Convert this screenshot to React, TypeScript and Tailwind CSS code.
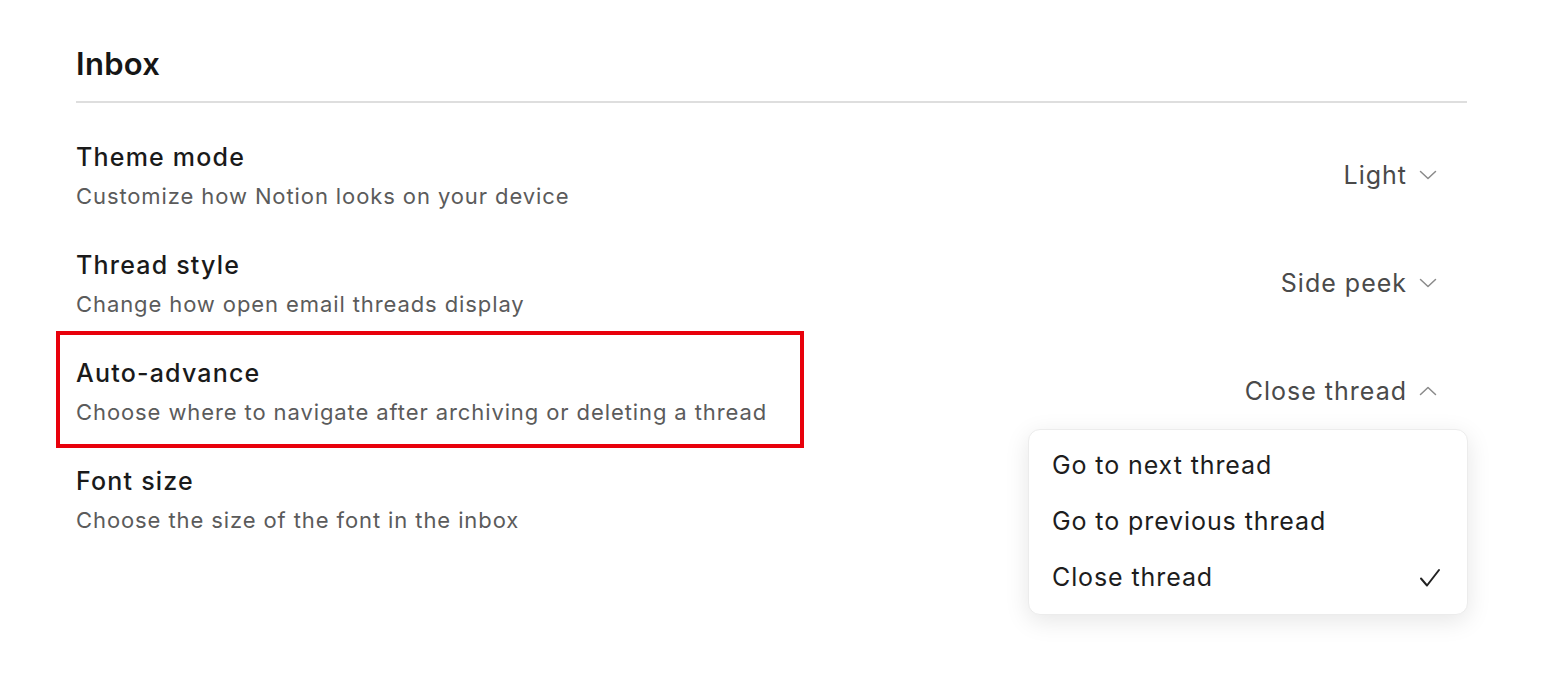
import React from 'react';

type Setting = {
  title: string;
  description: string;
  value: string;
  open?: boolean;
};

const settings: Setting[] = [
  { title: 'Theme mode', description: 'Customize how Notion looks on your device', value: 'Light' },
  { title: 'Thread style', description: 'Change how open email threads display', value: 'Side peek' },
  {
    title: 'Auto-advance',
    description: 'Choose where to navigate after archiving or deleting a thread',
    value: 'Close thread',
    open: true,
  },
  { title: 'Font size', description: 'Choose the size of the font in the inbox', value: '' },
];

const options = ['Go to next thread', 'Go to previous thread', 'Close thread'];

const Chevron: React.FC<{ up?: boolean }> = ({ up }) => (
  <svg width="18" height="10" viewBox="0 0 18 10" fill="none" className="text-[#8a8a8a]">
    <path
      d={up ? 'M1.5 8.5L9 1.5L16.5 8.5' : 'M1.5 1.5L9 8.5L16.5 1.5'}
      stroke="currentColor"
      strokeWidth="1.5"
      strokeLinecap="round"
      strokeLinejoin="round"
    />
  </svg>
);

const Check = () => (
  <svg width="22" height="20" viewBox="0 0 22 20" fill="none" className="text-[#222]">
    <path d="M2 10.5L8 17.5L20 2" stroke="currentColor" strokeWidth="2" strokeLinecap="round" strokeLinejoin="round" />
  </svg>
);

export default function App() {
  return (
    <div className="min-h-screen w-full bg-white font-['Inter',_sans-serif]">
      <div className="pl-[76px] pr-[87px] pt-[44px]">
        <h1 className="text-[31px] leading-[40px] font-semibold tracking-[0.3px] text-[#161616]">Inbox</h1>
        <div className="mt-[17px] h-[2px] bg-[#dedede]" />

        <div className="mt-[18px] flex flex-col">
          {settings.map((s) => (
            <div key={s.title} className="relative flex h-[108px] items-center justify-between">
              <div className="flex flex-col">
                <div className="text-[25px] leading-[32px] font-medium tracking-[1.2px] text-[#1a1a1a]">{s.title}</div>
                <div className="mt-[9px] text-[22px] leading-[28px] tracking-[0.9px] text-[#5b5b5b]">{s.description}</div>
              </div>

              {s.value && (
                <div className="mr-[30px] flex items-center gap-[12px] text-[25px] leading-[32px] tracking-[1px] text-[#4a4a4a]">
                  <span>{s.value}</span>
                  <Chevron up={s.open} />
                </div>
              )}

              {s.open && (
                <>
                  <div className="pointer-events-none absolute left-[-20px] top-[-6px] h-[117px] w-[748px] border-[4px] border-[#e8000b]" />
                  <div className="absolute right-[-1px] top-[92px] z-10 w-[440px] rounded-[12px] border border-[#ececec] bg-white py-[8px] shadow-[0_6px_24px_rgba(0,0,0,0.10)]">
                    {options.map((o) => (
                      <div
                        key={o}
                        className="flex h-[56px] items-center justify-between pl-[23px] pr-[26px] text-[25px] tracking-[0.9px] text-[#1d1d1d]"
                      >
                        <span>{o}</span>
                        {o === s.value && <Check />}
                      </div>
                    ))}
                  </div>
                </>
              )}
            </div>
          ))}
        </div>
      </div>
    </div>
  );
}
